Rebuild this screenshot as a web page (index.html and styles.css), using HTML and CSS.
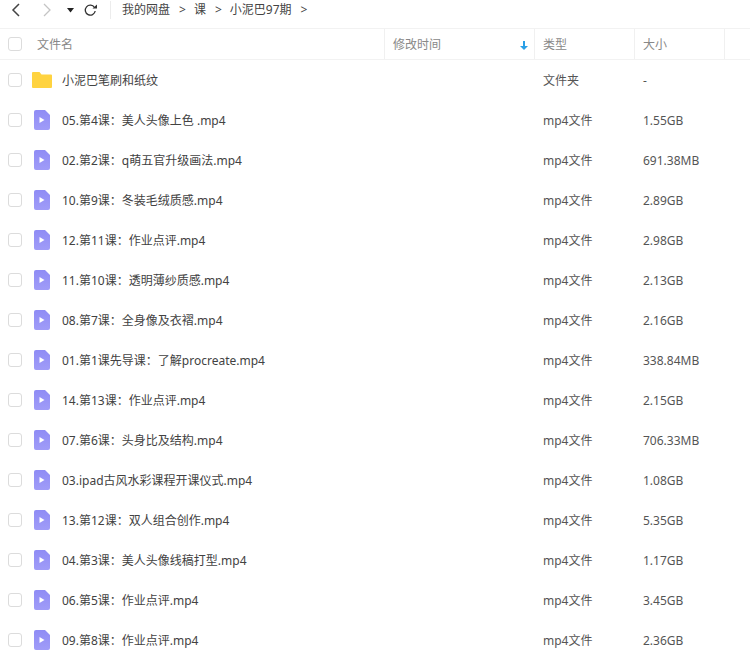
FILE: index.html
```html
<!DOCTYPE html>
<html lang="zh">
<head>
    <meta charset="utf-8">
    <title>小泥巴97期</title>
    <link rel="stylesheet" href="styles.css">
</head>
<body>
    <div class="toolbar">
        <svg class="tool-back" width="12" height="14" viewBox="0 0 12 14"><path d="M9 1 3 7l6 6" fill="none" stroke="#444" stroke-width="1.5"/></svg>
        <svg class="tool-next" width="12" height="14" viewBox="0 0 12 14"><path d="M3 1l6 6-6 6" fill="none" stroke="#c4c4c4" stroke-width="1.3"/></svg>
        <svg class="tool-drop" width="7" height="5" viewBox="0 0 7 5"><path d="M0 0h7L3.500 4.500z" fill="#222"/></svg>
        <svg class="tool-refresh" width="14" height="14" viewBox="0 0 14 14"><path d="M11.500 4.500A5 5 0 1 0 12.200 8" fill="none" stroke="#333" stroke-width="1.300"/><path d="M9.500 5.500h4.500V1.500z" fill="#333"/></svg>
        <span class="tool-line"></span>
        <span class="crumb">我的网盘</span><span class="arrow">&gt;</span>
        <span class="crumb">课</span><span class="arrow">&gt;</span>
        <span class="crumb">小泥巴97期</span><span class="arrow">&gt;</span>
    </div>

    <div class="head">
        <span class="check"></span>
        <span class="head-name">文件名</span>
        <span class="head-time">修改时间
            <svg width="8" height="9" viewBox="0 0 8 9"><path d="M3 0h2v5h3L4 9 0 5h3z" fill="#2a9fe6"/></svg>
        </span>
        <span class="head-type">类型</span>
        <span class="head-size">大小</span>
        <span class="head-end"></span>
    </div>

    <div class="row">
        <span class="check"></span>
        <svg class="icon-folder" width="20" height="16" viewBox="0 0 20 16"><path d="M1 0h6.500l2 2.500H19a1 1 0 0 1 1 1V15a1 1 0 0 1-1 1H1a1 1 0 0 1-1-1V1a1 1 0 0 1 1-1z" fill="#ffd340"/></svg>
        <span class="name">小泥巴笔刷和纸纹</span>
        <span class="type">文件夹</span>
        <span class="size">-</span>
    </div>
    <div class="row">
        <span class="check"></span>
        <svg class="icon-video" width="16" height="20" viewBox="0 0 16 20"><use href="#video"/></svg>
        <span class="name">05.第4课：美人头像上色 .mp4</span>
        <span class="type">mp4文件</span>
        <span class="size">1.55GB</span>
    </div>
    <div class="row">
        <span class="check"></span>
        <svg class="icon-video" width="16" height="20" viewBox="0 0 16 20"><use href="#video"/></svg>
        <span class="name">02.第2课：q萌五官升级画法.mp4</span>
        <span class="type">mp4文件</span>
        <span class="size">691.38MB</span>
    </div>
    <div class="row">
        <span class="check"></span>
        <svg class="icon-video" width="16" height="20" viewBox="0 0 16 20"><use href="#video"/></svg>
        <span class="name">10.第9课：冬装毛绒质感.mp4</span>
        <span class="type">mp4文件</span>
        <span class="size">2.89GB</span>
    </div>
    <div class="row">
        <span class="check"></span>
        <svg class="icon-video" width="16" height="20" viewBox="0 0 16 20"><use href="#video"/></svg>
        <span class="name">12.第11课：作业点评.mp4</span>
        <span class="type">mp4文件</span>
        <span class="size">2.98GB</span>
    </div>
    <div class="row">
        <span class="check"></span>
        <svg class="icon-video" width="16" height="20" viewBox="0 0 16 20"><use href="#video"/></svg>
        <span class="name">11.第10课：透明薄纱质感.mp4</span>
        <span class="type">mp4文件</span>
        <span class="size">2.13GB</span>
    </div>
    <div class="row">
        <span class="check"></span>
        <svg class="icon-video" width="16" height="20" viewBox="0 0 16 20"><use href="#video"/></svg>
        <span class="name">08.第7课：全身像及衣褶.mp4</span>
        <span class="type">mp4文件</span>
        <span class="size">2.16GB</span>
    </div>
    <div class="row">
        <span class="check"></span>
        <svg class="icon-video" width="16" height="20" viewBox="0 0 16 20"><use href="#video"/></svg>
        <span class="name">01.第1课先导课：了解procreate.mp4</span>
        <span class="type">mp4文件</span>
        <span class="size">338.84MB</span>
    </div>
    <div class="row">
        <span class="check"></span>
        <svg class="icon-video" width="16" height="20" viewBox="0 0 16 20"><use href="#video"/></svg>
        <span class="name">14.第13课：作业点评.mp4</span>
        <span class="type">mp4文件</span>
        <span class="size">2.15GB</span>
    </div>
    <div class="row">
        <span class="check"></span>
        <svg class="icon-video" width="16" height="20" viewBox="0 0 16 20"><use href="#video"/></svg>
        <span class="name">07.第6课：头身比及结构.mp4</span>
        <span class="type">mp4文件</span>
        <span class="size">706.33MB</span>
    </div>
    <div class="row">
        <span class="check"></span>
        <svg class="icon-video" width="16" height="20" viewBox="0 0 16 20"><use href="#video"/></svg>
        <span class="name">03.ipad古风水彩课程开课仪式.mp4</span>
        <span class="type">mp4文件</span>
        <span class="size">1.08GB</span>
    </div>
    <div class="row">
        <span class="check"></span>
        <svg class="icon-video" width="16" height="20" viewBox="0 0 16 20"><use href="#video"/></svg>
        <span class="name">13.第12课：双人组合创作.mp4</span>
        <span class="type">mp4文件</span>
        <span class="size">5.35GB</span>
    </div>
    <div class="row">
        <span class="check"></span>
        <svg class="icon-video" width="16" height="20" viewBox="0 0 16 20"><use href="#video"/></svg>
        <span class="name">04.第3课：美人头像线稿打型.mp4</span>
        <span class="type">mp4文件</span>
        <span class="size">1.17GB</span>
    </div>
    <div class="row">
        <span class="check"></span>
        <svg class="icon-video" width="16" height="20" viewBox="0 0 16 20"><use href="#video"/></svg>
        <span class="name">06.第5课：作业点评.mp4</span>
        <span class="type">mp4文件</span>
        <span class="size">3.45GB</span>
    </div>
    <div class="row">
        <span class="check"></span>
        <svg class="icon-video" width="16" height="20" viewBox="0 0 16 20"><use href="#video"/></svg>
        <span class="name">09.第8课：作业点评.mp4</span>
        <span class="type">mp4文件</span>
        <span class="size">2.36GB</span>
    </div>

    <svg width="0" height="0" class="defs">
        <defs>
            <linearGradient id="videoFill" x1="0" y1="0" x2="0" y2="1">
                <stop offset="0" stop-color="#8f8cf5"/>
                <stop offset="1" stop-color="#a09cf8"/>
            </linearGradient>
            <g id="video">
                <path d="M2 0h9l5 5v13a2 2 0 0 1-2 2H2a2 2 0 0 1-2-2V2a2 2 0 0 1 2-2z" fill="url(#videoFill)"/>
                <path d="M5.500 7v6l5-3z" fill="#fff"/>
            </g>
        </defs>
    </svg>
</body>
</html>
```

FILE: styles.css
```css
html, body {
    margin: 0;
    height: 658px;
    overflow: hidden;
    background-color: #fff;
}
body {
    font-family: "Noto Sans", "Noto Sans CJK SC", sans-serif;
    font-size: 12px;
    line-height: 16px;
    color: #424e67;
}
.defs {
    display: block;
}

.toolbar {
    display: flex;
    align-items: center;
    height: 20px;
    padding-bottom: 8px;
    color: #444;
    border-bottom: 1px solid #f2f2f2;
}
.tool-back {
    margin-left: 10px;
}
.tool-next {
    margin-left: 19px;
}
.tool-drop {
    margin-left: 14px;
}
.tool-refresh {
    margin-left: 9px;
}
.tool-line {
    width: 1px;
    height: 18px;
    margin: 0 11px 0 13px;
    background-color: #ececec;
}
.arrow {
    margin: 0 8px 0 9px;
    color: #444;
}

.head {
    display: flex;
    align-items: center;
    height: 30px;
    color: #888;
    border-bottom: 1px solid #f2f2f2;
}
.head span:not(.check) {
    display: flex;
    align-items: center;
    box-sizing: border-box;
    height: 30px;
    padding-top: 2px;
}
.head .check {
    margin-right: 15px;
}
.head-name {
    width: 347px;
}
.head-time {
    justify-content: space-between;
    width: 150px;
    padding-right: 6px;
    padding-left: 8px;
    border-left: 1px solid #f0f0f0;
}
.head-type, .head-size {
    padding-left: 8px;
    border-left: 1px solid #f0f0f0;
}
.head-type {
    width: 100px;
}
.head-size {
    width: 90px;
}
.head-end {
    border-left: 1px solid #f0f0f0;
}

.check {
    flex: none;
    box-sizing: border-box;
    width: 14px;
    height: 14px;
    margin-left: 8px;
    border: 1px solid #dcdcdc;
    border-radius: 3px;
}

.row {
    display: flex;
    align-items: center;
    height: 40px;
    color: #424242;
}
.icon-folder {
    flex: none;
    margin: 0 10px 0 10px;
}
.icon-video {
    flex: none;
    margin: 0 12px 0 12px;
}
.name, .type, .size {
    padding-top: 2px;
}
.name {
    flex: none;
    width: 481px;
}
.type {
    flex: none;
    width: 100px;
    color: #555;
}
.size {
    color: #555;
}
```
